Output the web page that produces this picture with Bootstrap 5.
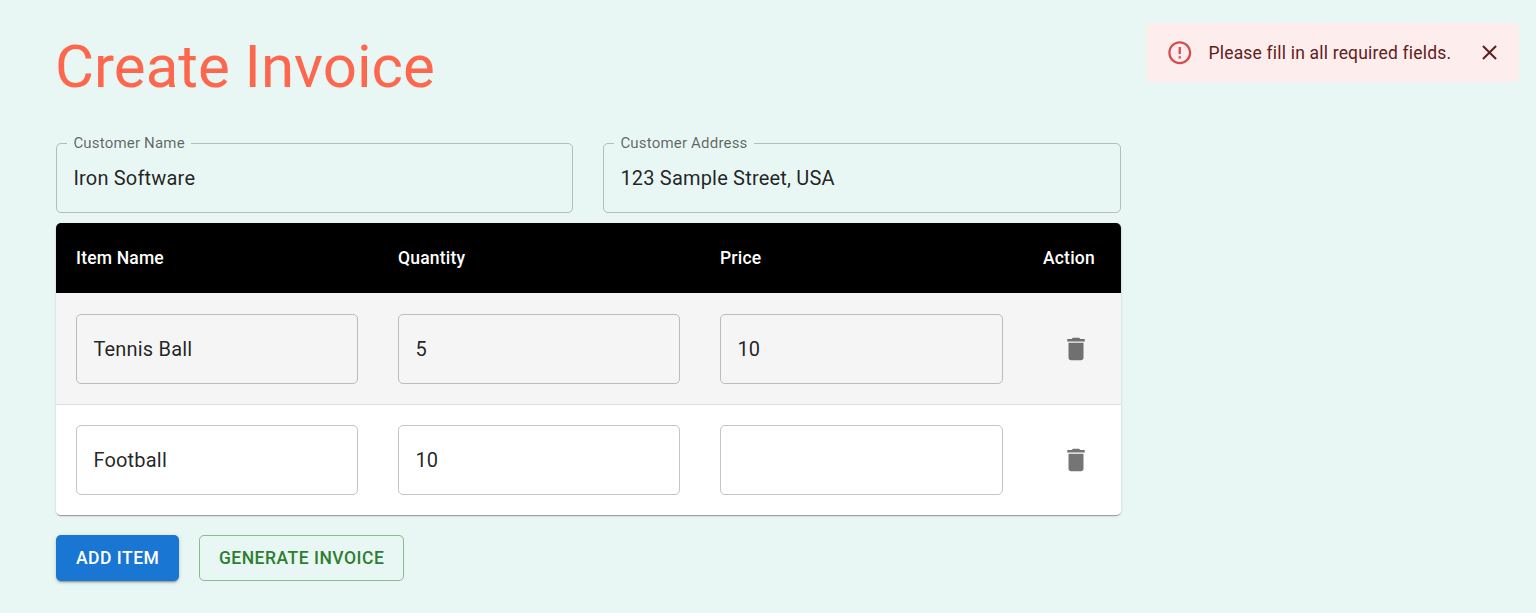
<!DOCTYPE html>
<html lang="en">
<head>
  <meta charset="UTF-8">
  <meta name="viewport" content="width=device-width, initial-scale=1.0">
  <title>Create Invoice</title>
  <link href="https://cdn.jsdelivr.net/npm/bootstrap@5.3.0/dist/css/bootstrap.min.css" rel="stylesheet">
  <style>
    body { background: #e8f7f3; font-family: Roboto, "Liberation Sans", sans-serif; color: rgba(0,0,0,.87); min-height: 613px; }
    .page-wrap { width: 1065px; margin-left: 56px; padding-top: 23px; }
    .page-title { font-size: 60px; font-weight: 400; line-height: 88px; color: #fc674d; margin: 0 0 23px -1px; }
    .field-row { gap: 30px; margin-bottom: 10px; }
    .out-field { min-width: 0; border: 1px solid rgba(0,0,0,.23); border-radius: 5px; padding: 0 16.4px; height: 79px; }
    .field-name { width: 517px; }
    .field-addr { width: 518px; }
    .out-field legend { float: none; width: auto; font-size: 15px; line-height: 18px; height: 18px; letter-spacing: .19px; color: rgba(0,0,0,.6); padding: 0 6px; margin: 0 0 0 -6px; }
    .out-field input { display: block; width: 100%; border: 0; background: transparent; outline: 0; padding: 11px 0 0; font-size: 20px; line-height: 30px; letter-spacing: .19px; color: rgba(0,0,0,.87); }
    .item-card { border: 0; border-radius: 5px; overflow: hidden; background: #fff; box-shadow: 0 2px 1px -1px rgba(0,0,0,.2), 0 1px 1px 0 rgba(0,0,0,.14), 0 1px 3px 0 rgba(0,0,0,.12); margin-bottom: 20px; }
    .item-table { table-layout: fixed; margin: 0; width: 1065px; }
    .item-table .w-item, .item-table .w-qty { width: 322px; }
    .item-table .w-price { width: 323px; }
    .item-table thead th { background: #000; color: #fff; font-size: 17.5px; font-weight: 500; line-height: 30px; letter-spacing: .19px; padding: 20px; border: 0; }
    .item-table tbody td { padding: 20px; vertical-align: middle; border-bottom: 1px solid #e0e0e0; color: inherit; }
    .item-table tbody tr:first-child td { background: #f5f5f5; padding-top: 21px; }
    .item-table tbody tr:last-child td { background: #fff; border-bottom: 0; }
    .item-table tbody tr td.action-cell { padding: 0 0 0 28px; }
    .cell-input { height: 70px; border: 1px solid rgba(0,0,0,.23); border-radius: 5px; background: transparent; font-size: 20px; line-height: 30px; letter-spacing: .19px; padding: 0 16.4px; color: rgba(0,0,0,.87); }
    .del-btn { width: 50px; height: 50px; padding: 0; border: 0; background: transparent; color: rgba(0,0,0,.54); display: flex; align-items: center; justify-content: center; }
    .del-btn svg { width: 30px; height: 30px; fill: currentColor; }
    .btn-row { gap: 20px; }
    .act-btn { height: 46px; font-size: 17.5px; font-weight: 500; line-height: 30px; letter-spacing: .5px; text-transform: uppercase; border-radius: 5px; padding: 0 18.5px; }
    .act-add { background: #1976d2; border: 0; color: #fff; padding: 0 20px; box-shadow: 0 3px 1px -2px rgba(0,0,0,.2), 0 2px 2px 0 rgba(0,0,0,.14), 0 1px 5px 0 rgba(0,0,0,.12); }
    .act-gen { background: transparent; border: 1px solid rgba(46,125,50,.5); color: #2e7d32; }
    .toast-box { position: absolute; top: 23px; left: 1146px; width: 373px; height: 59px; background: #fdeded; color: #5f2120; border-radius: 5px; padding: 0 20px; font-size: 17.5px; letter-spacing: .19px; }
    .toast-box span { padding-top: 1px; }
    .toast-icon { width: 27.5px; height: 27.5px; fill: #d32f2f; opacity: .85; margin-right: 15px; flex: none; }
    .toast-close { border: 0; background: transparent; padding: 0; margin-left: auto; margin-right: -3px; color: inherit; display: flex; }
    .toast-close svg { width: 25px; height: 25px; fill: currentColor; }
  </style>
</head>
<body>
  <div class="page-wrap">
    <h1 class="page-title">Create Invoice</h1>

    <div class="d-flex field-row">
      <fieldset class="out-field field-name">
        <legend>Customer Name</legend>
        <input type="text" value="Iron Software">
      </fieldset>
      <fieldset class="out-field field-addr">
        <legend>Customer Address</legend>
        <input type="text" value="123 Sample Street, USA">
      </fieldset>
    </div>

    <div class="item-card">
      <table class="table item-table">
        <colgroup>
          <col class="w-item"><col class="w-qty"><col class="w-price"><col>
        </colgroup>
        <thead>
          <tr><th>Item Name</th><th>Quantity</th><th>Price</th><th>Action</th></tr>
        </thead>
        <tbody>
          <tr>
            <td><input class="form-control cell-input" type="text" value="Tennis Ball"></td>
            <td><input class="form-control cell-input" type="text" value="5"></td>
            <td><input class="form-control cell-input" type="text" value="10"></td>
            <td class="action-cell">
              <button class="del-btn" type="button" aria-label="Delete">
                <svg viewBox="0 0 24 24"><path d="M6 19c0 1.1.9 2 2 2h8c1.1 0 2-.9 2-2V7H6v12zM19 4h-3.5l-1-1h-5l-1 1H5v2h14V4z"/></svg>
              </button>
            </td>
          </tr>
          <tr>
            <td><input class="form-control cell-input" type="text" value="Football"></td>
            <td><input class="form-control cell-input" type="text" value="10"></td>
            <td><input class="form-control cell-input" type="text" value=""></td>
            <td class="action-cell">
              <button class="del-btn" type="button" aria-label="Delete">
                <svg viewBox="0 0 24 24"><path d="M6 19c0 1.1.9 2 2 2h8c1.1 0 2-.9 2-2V7H6v12zM19 4h-3.5l-1-1h-5l-1 1H5v2h14V4z"/></svg>
              </button>
            </td>
          </tr>
        </tbody>
      </table>
    </div>

    <div class="d-flex btn-row">
      <button class="btn act-btn act-add" type="button">Add Item</button>
      <button class="btn act-btn act-gen" type="button">Generate Invoice</button>
    </div>
  </div>

  <div class="toast-box d-flex align-items-center" role="alert">
    <svg class="toast-icon" viewBox="0 0 24 24"><path d="M11 15h2v2h-2zm0-8h2v6h-2zm.99-5C6.47 2 2 6.48 2 12s4.47 10 9.99 10C17.52 22 22 17.52 22 12S17.52 2 11.99 2zM12 20c-4.42 0-8-3.58-8-8s3.58-8 8-8 8 3.58 8 8-3.58 8-8 8z"/></svg>
    <span>Please fill in all required fields.</span>
    <button class="toast-close" type="button" aria-label="Close">
      <svg viewBox="0 0 24 24"><path d="M19 6.41 17.59 5 12 10.59 6.41 5 5 6.41 10.59 12 5 17.59 6.41 19 12 13.41 17.59 19 19 17.59 13.41 12z"/></svg>
    </button>
  </div>

  <script src="https://cdn.jsdelivr.net/npm/bootstrap@5.3.0/dist/js/bootstrap.bundle.min.js"></script>
</body>
</html>
